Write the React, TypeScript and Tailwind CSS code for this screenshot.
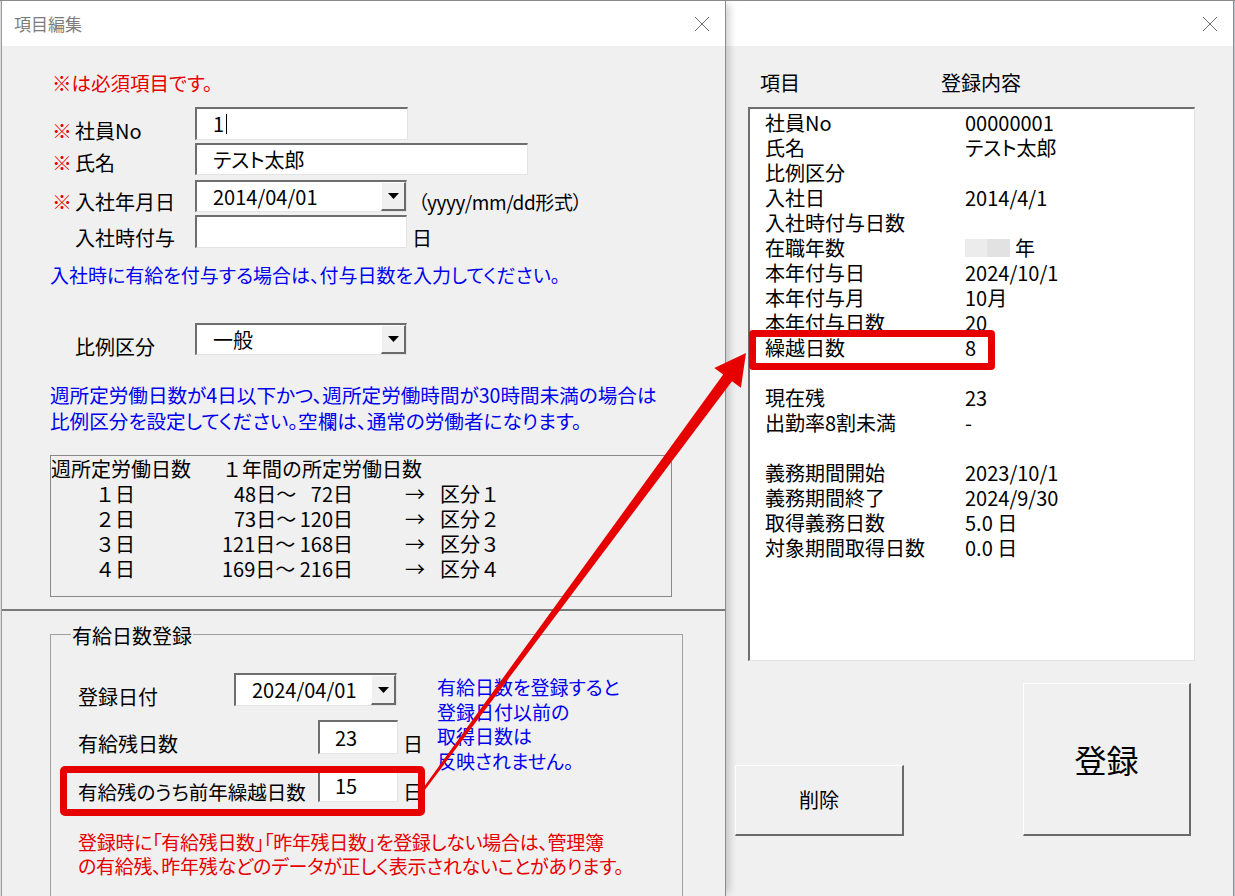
import React from 'react';

const sunken =
  'bg-white border-t-2 border-l-2 border-b border-r border-t-[#6e6e6e] border-l-[#6e6e6e] border-b-[#e3e3e3] border-r-[#e3e3e3]';
const raised =
  'bg-[#f0f0f0] border-t border-l border-b-2 border-r-2 border-t-white border-l-white border-b-[#6a6a6a] border-r-[#6a6a6a]';

const ratioTable = [
  ['１日', '48日～', '72日', '区分１', 'pl-[12px]'],
  ['２日', '73日～', '120日', '区分２', 'pl-[12px]'],
  ['３日', '121日～', '168日', '区分３', 'pl-0'],
  ['４日', '169日～', '216日', '区分４', 'pl-0'],
];

const summary: ([string, string] | null)[] = [
  ['社員No', '00000001'],
  ['氏名', 'テスト太郎'],
  ['比例区分', ''],
  ['入社日', '2014/4/1'],
  ['入社時付与日数', ''],
  ['在職年数', '年'],
  ['本年付与日', '2024/10/1'],
  ['本年付与月', '10月'],
  ['本年付与日数', '20'],
  ['繰越日数', '8'],
  null,
  ['現在残', '23'],
  ['出勤率8割未満', '-'],
  null,
  ['義務期間開始', '2023/10/1'],
  ['義務期間終了', '2024/9/30'],
  ['取得義務日数', '5.0 日'],
  ['対象期間取得日数', '0.0 日'],
];

function CloseIcon() {
  return (
    <svg width="16" height="16" viewBox="0 0 16 16">
      <path d="M1 1L15 15M15 1L1 15" stroke="#6a6a6a" strokeWidth="1" />
    </svg>
  );
}

function TitleBar({ title }: { title?: string }) {
  return (
    <div className="h-[45px] shrink-0 bg-white flex items-center justify-between pl-[12px] pr-[15px]">
      <span className="text-[17px] text-[#7c7c7c]">{title}</span>
      <CloseIcon />
    </div>
  );
}

function TextBox({ className, children }: { className: string; children?: React.ReactNode }) {
  return (
    <div className={`${sunken} shrink-0 flex items-center text-[20px] leading-[24px] ${className}`}>
      {children}
    </div>
  );
}

function ComboBox({ className, value }: { className: string; value: string }) {
  return (
    <div className={`${sunken} shrink-0 flex items-stretch ${className}`}>
      <div className="flex-1 flex items-center pl-[16px] text-[20px] leading-[24px]">{value}</div>
      <div className={`${raised} w-[25px] flex items-center justify-center`}>
        <svg width="11" height="6" viewBox="0 0 11 6">
          <path d="M0 0H11L5.5 6Z" fill="#000" />
        </svg>
      </div>
    </div>
  );
}

function Label({ text, required, className }: { text: string; required?: boolean; className: string }) {
  return (
    <div className={`shrink-0 flex text-[20px] leading-[24px] ${className}`}>
      <span className="w-[23px] text-[#e60000]">{required ? '※' : ''}</span>
      <span>{text}</span>
    </div>
  );
}

function EditForm() {
  return (
    <div className="relative z-10 w-[724px] shrink-0 flex flex-col bg-[#f0f0f0] border-r border-[#8c8c8c] shadow-[6px_0_8px_-3px_rgba(0,0,0,0.2)]">
      <TitleBar title="項目編集" />

      <div className="mt-[25px] h-[24px] pl-[50px] text-[19.5px] leading-[24px] text-[#e60000]">
        ※は必須項目です。
      </div>

      <div className="mt-[12px] h-[33px] pl-[50px] flex">
        <Label required text="社員No" className="w-[143px] pt-[12px]" />
        <TextBox className="w-[213px] h-[33px] pl-[16px]">
          <span>1</span>
          <span className="ml-[2px] w-px h-[20px] bg-black" />
        </TextBox>
      </div>

      <div className="mt-[3px] h-[32px] pl-[50px] flex">
        <Label required text="氏名" className="w-[143px] pt-[8px]" />
        <TextBox className="w-[333px] h-[32px] pl-[16px]">テスト太郎</TextBox>
      </div>

      <div className="mt-[5px] h-[32px] pl-[50px] flex">
        <Label required text="入社年月日" className="w-[143px] pt-[10px]" />
        <ComboBox className="w-[212px] h-[32px]" value="2014/04/01" />
        <span className="ml-[11px] pt-[10px] text-[19px] tracking-[-0.4px] leading-[24px]">（yyyy/mm/dd形式）</span>
      </div>

      <div className="mt-[3px] h-[33px] pl-[50px] flex">
        <Label text="入社時付与" className="w-[143px] pt-[11px]" />
        <TextBox className="w-[212px] h-[33px]" />
        <span className="ml-[5px] pt-[11px] text-[20px] leading-[24px]">日</span>
      </div>

      <div className="mt-[15px] h-[24px] pl-[48px] text-[19px] leading-[24px] text-[#0000ee] whitespace-nowrap">
        入社時に有給を付与する場合は、付与日数を入力してください。
      </div>

      <div className="mt-[36px] h-[32px] pl-[50px] flex">
        <Label text="比例区分" className="w-[143px] pt-[12px]" />
        <ComboBox className="w-[212px] h-[32px]" value="一般" />
      </div>

      <div className="mt-[27px] pl-[48px] text-[19.6px] leading-[26px] text-[#0000ee] whitespace-nowrap">
        <p>週所定労働日数が4日以下かつ、週所定労働時間が30時間未満の場合は</p>
        <p>比例区分を設定してください。空欄は、通常の労働者になります。</p>
      </div>

      <div className="ml-[48px] mt-[21px] w-[622px] h-[142px] shrink-0 border border-[#8a8a8a] text-[20px] leading-[25px] whitespace-nowrap [font-feature-settings:normal]">
        <div className="flex">
          <span className="w-[171px]">週所定労働日数</span>
          <span>１年間の所定労働日数</span>
        </div>
        {ratioTable.map(([days, from, to, kubun, pad]) => (
          <div key={days} className="flex">
            <span className="w-[171px] pl-[44px]">{days}</span>
            <span className={`w-[131px] flex justify-between ${pad}`}>
              <span>{from}</span>
              <span>{to}</span>
            </span>
            <span className="ml-[52px] w-[35px]">→</span>
            <span>{kubun}</span>
          </div>
        ))}
      </div>

      <div className="mt-[12px] h-[2px] shrink-0 bg-[#7a7a7a]" />

      {/* 有給日数登録 frame */}
      <div className="relative ml-[48px] mt-[23px] w-[633px] h-[300px] shrink-0 border border-[#a0a0a0]">
        <span className="absolute left-[20px] -top-[11px] bg-[#f0f0f0] px-[1px] text-[20px] leading-[24px]">
          有給日数登録
        </span>

        <div className="mt-[38px] flex">
          <div className="w-[374px] shrink-0 flex flex-col">
            <div className="h-[33px] pl-[27px] flex">
              <span className="w-[156px] shrink-0 pt-[12px] text-[20px] leading-[24px]">登録日付</span>
              <ComboBox className="w-[163px] h-[33px]" value="2024/04/01" />
            </div>
            <div className="mt-[14px] h-[34px] pl-[27px] flex">
              <span className="w-[240px] shrink-0 pt-[12px] text-[20px] leading-[24px]">有給残日数</span>
              <TextBox className="w-[80px] h-[34px] pl-[15px]">23</TextBox>
              <span className="ml-[5px] pt-[12px] text-[20px] leading-[24px]">日</span>
            </div>
            <div className="mt-[15px] h-[33px] pl-[27px] flex">
              <span className="w-[240px] shrink-0 pt-[11px] text-[19.5px] leading-[24px] whitespace-nowrap">
                有給残のうち前年繰越日数
              </span>
              <TextBox className="w-[80px] h-[33px] pl-[15px]">15</TextBox>
              <span className="ml-[5px] pt-[11px] text-[20px] leading-[24px]">日</span>
            </div>
          </div>
          <div className="ml-[12px] mt-[2px] text-[19px] leading-[24.7px] text-[#0000ee] whitespace-nowrap">
            <p>有給日数を登録すると</p>
            <p>登録日付以前の</p>
            <p>取得日数は</p>
            <p>反映されません。</p>
          </div>
        </div>

        <div className="mt-[28px] pl-[27px] text-[19px] tracking-[-0.3px] leading-[24px] text-[#e60000] whitespace-nowrap">
          <p>登録時に「有給残日数」「昨年残日数」を登録しない場合は、管理簿</p>
          <p>の有給残、昨年残などのデータが正しく表示されないことがあります。</p>
        </div>
      </div>
    </div>
  );
}

function SummaryPanel() {
  return (
    <div className="w-[508px] shrink-0 flex flex-col bg-[#f0f0f0] border-r border-[#8c8c8c]">
      <TitleBar />

      <div className="mt-[25px] h-[24px] pl-[34px] flex text-[20px] leading-[24px]">
        <span className="w-[181px]">項目</span>
        <span>登録内容</span>
      </div>

      <div className={`${sunken} ml-[22px] mt-[12px] w-[447px] h-[554px] shrink-0 pt-[1px] pl-[15px] text-[20px] leading-[25px] whitespace-nowrap`}>
        {summary.map((row, i) =>
          row ? (
            <div key={i} className="flex h-[25px]">
              <span className="w-[200px]">{row[0]}</span>
              {row[0] === '在職年数' ? (
                <span className="flex items-center">
                  <span className="flex h-[18px] mt-[1px]">
                    <span className="w-[22px] bg-[#ececec]" />
                    <span className="w-[23px] bg-[#e2e2e2]" />
                  </span>
                  <span className="ml-[5px]">{row[1]}</span>
                </span>
              ) : (
                <span>{row[1]}</span>
              )}
            </div>
          ) : (
            <div key={i} className="h-[25px]" />
          ),
        )}
      </div>

      <div className="mt-[22px] flex items-end">
        <button className={`${raised} ml-[9px] w-[169px] h-[71px] text-[20px]`}>削除</button>
        <button className={`${raised} ml-[119px] w-[168px] h-[153px] text-[32px]`}>登録</button>
      </div>
    </div>
  );
}

export default function App() {
  return (
    <div className="relative w-[1235px] h-[896px] overflow-hidden flex border-t border-[#8a8a8a] bg-[#f0f0f0] text-black font-['Noto_Sans_CJK_JP',sans-serif] [font-feature-settings:'palt']">
      <div className="w-[2px] shrink-0 bg-[#dcdcdc] border-r border-[#9a9a9a]" />
      <EditForm />
      <SummaryPanel />
      <div className="w-px shrink-0 bg-[#b9c6d3]" />

      {/* annotation: highlight boxes and arrow */}
      <div className="absolute left-[60px] top-[765px] w-[365px] h-[50px] border-[7px] border-[#e60000] rounded-[5px] z-20" />
      <div className="absolute left-[749px] top-[329px] w-[246px] h-[40px] border-[7px] border-[#e60000] rounded-[4px] z-20" />
      <svg className="absolute inset-0 z-20 pointer-events-none" width="1235" height="896" viewBox="0 0 1235 896">
        <polygon
          points="423,787.2 723.2,373.6 714.3,367 746,352 740.9,386.8 732,380.2 425,788.8"
          fill="#e60000"
        />
      </svg>
    </div>
  );
}
